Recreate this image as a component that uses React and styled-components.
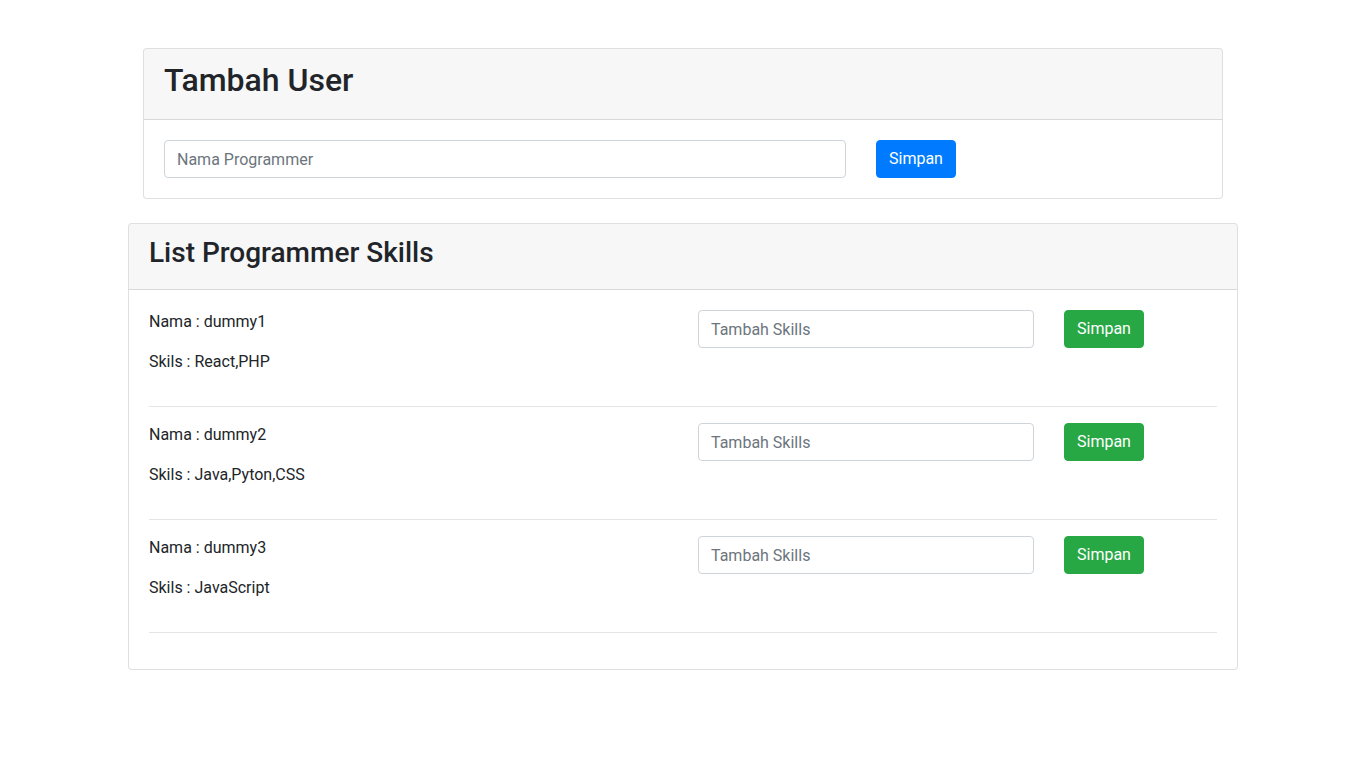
import React from "react";
import styled, { createGlobalStyle } from "styled-components";

const GlobalStyle = createGlobalStyle`
  *, *::before, *::after { box-sizing: border-box; }
  body {
    margin: 0;
    font-family: Roboto, "Segoe UI", "Noto Sans", sans-serif;
    font-size: 16px;
    line-height: 1.5;
    color: #212529;
    background: #fff;
  }
`;

const Container = styled.div`
  max-width: 1140px;
  margin: 0 auto;
  padding: 0 15px;
`;

const Inner = styled.div`
  padding: 0 15px;
`;

const Card = styled.div`
  margin-top: ${(p) => p.$mt}px;
  border: 1px solid rgba(0, 0, 0, 0.125);
  border-radius: 4px;
  background: #fff;
  overflow: hidden;
`;

const CardHeader = styled.div`
  padding: 12px 20px;
  background: rgba(0, 0, 0, 0.03);
  border-bottom: 1px solid rgba(0, 0, 0, 0.125);
`;

const Title = styled.h2`
  margin: 0 0 8px;
  font-size: ${(p) => p.$size}px;
  font-weight: 500;
  line-height: ${(p) => p.$lh}px;
`;

const CardBody = styled.div`
  padding: 20px;
`;

const Row = styled.div`
  display: grid;
  grid-template-columns: ${(p) => p.$cols};
  margin: 0 -15px;
`;

const Col = styled.div`
  padding: 0 15px;
  min-width: 0;
`;

const Input = styled.input`
  display: block;
  width: 100%;
  height: 38px;
  padding: 6px 12px;
  font: inherit;
  color: #495057;
  border: 1px solid #ced4da;
  border-radius: 4px;
  background: #fff;
  outline: none;
  &::placeholder { color: #6c757d; opacity: 1; }
`;

const Button = styled.button`
  display: inline-block;
  padding: 6px 12px;
  font: inherit;
  line-height: 1.5;
  color: #fff;
  background: ${(p) => (p.$variant === "success" ? "#28a745" : "#007bff")};
  border: 1px solid ${(p) => (p.$variant === "success" ? "#28a745" : "#007bff")};
  border-radius: 4px;
  cursor: pointer;
`;

const Text = styled.p`
  margin: 0 0 16px;
`;

const Divider = styled.hr`
  margin: 16px 0;
  border: 0;
  border-top: 1px solid rgba(0, 0, 0, 0.1);
`;

const programmers = [
  { name: "dummy1", skills: "React,PHP" },
  { name: "dummy2", skills: "Java,Pyton,CSS" },
  { name: "dummy3", skills: "JavaScript" },
];

export default function App() {
  return (
    <>
      <GlobalStyle />
      <Container>
        <Inner>
          <Card $mt={48}>
            <CardHeader>
              <Title $size={32} $lh={38}>Tambah User</Title>
            </CardHeader>
            <CardBody>
              <Row $cols="8fr 4fr">
                <Col>
                  <Input placeholder="Nama Programmer" />
                </Col>
                <Col>
                  <Button>Simpan</Button>
                </Col>
              </Row>
            </CardBody>
          </Card>
        </Inner>
        <Card $mt={24}>
          <CardHeader>
            <Title as="h3" $size={28} $lh={33}>List Programmer Skills</Title>
          </CardHeader>
          <CardBody>
            {programmers.map((p) => (
              <div key={p.name}>
                <Row $cols="6fr 4fr 2fr">
                  <Col>
                    <Text>Nama : {p.name}</Text>
                    <Text>Skils : {p.skills}</Text>
                  </Col>
                  <Col>
                    <Input placeholder="Tambah Skills" />
                  </Col>
                  <Col>
                    <Button $variant="success">Simpan</Button>
                  </Col>
                </Row>
                <Divider />
              </div>
            ))}
          </CardBody>
        </Card>
      </Container>
    </>
  );
}
